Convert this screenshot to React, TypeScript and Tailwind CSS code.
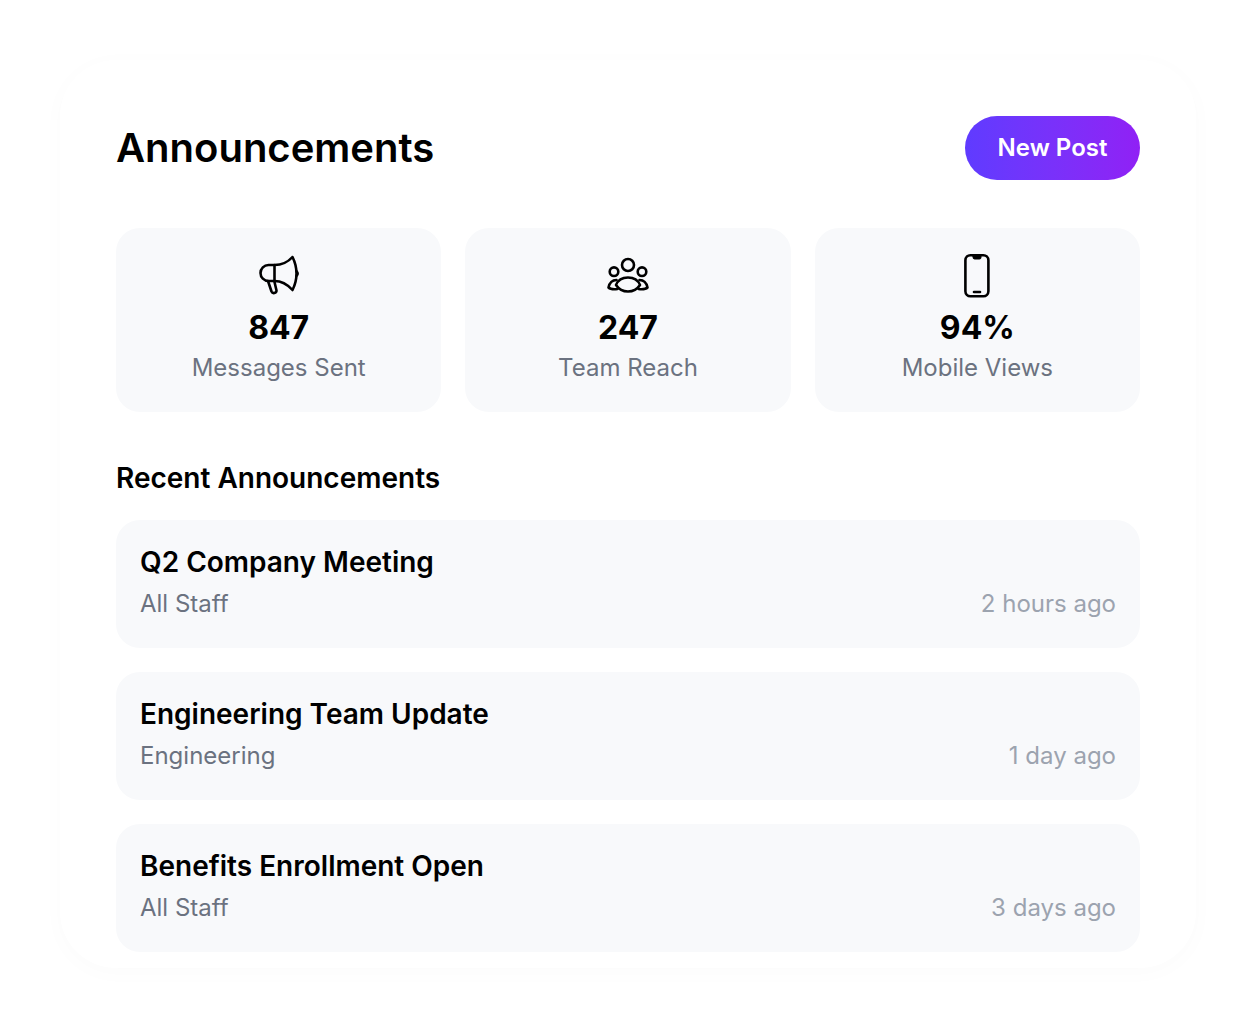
import React from "react";

const MegaphoneIcon = () => (
  <svg width="48" height="48" viewBox="0 0 48 48" fill="none" stroke="#000" strokeWidth="2.6" strokeLinecap="round" strokeLinejoin="round">
    <path d="M37.5 5C33 10 26 13 19.5 13H13.5a8 8 0 0 0 0 16H19.5C26 29 33 33 37.5 38C40 33 41.5 27 41.5 21.5C41.5 16 40 10 37.5 5Z" />
    <path d="M19.5 13V29" />
    <path d="M13 29L16.5 39.5a2.6 2.6 0 0 0 5-1L19.5 30" />
    <path d="M41.8 19.5c.8 1 .8 3 0 4" />
  </svg>
);

const TeamIcon = () => (
  <svg width="48" height="48" viewBox="0 0 48 48" fill="none" stroke="#000" strokeWidth="2.6" strokeLinecap="round" strokeLinejoin="round">
    <circle cx="24" cy="13" r="6" />
    <circle cx="10" cy="19.7" r="4.3" />
    <circle cx="38" cy="19.7" r="4.3" />
    <path d="M12 33C14 28 18 25.5 24 25.5C30 25.5 34 28 36 33C33 37.5 29 39.5 24 39.5C19 39.5 15 37.5 12 33Z" />
    <path d="M12.5 28C8 28 5.5 31 4.5 35.5C6 37 9 37.5 13.5 37" />
    <path d="M35.5 28C40 28 42.5 31 43.5 35.5C42 37 39 37.5 34.5 37" />
  </svg>
);

const PhoneIcon = () => (
  <svg width="48" height="48" viewBox="0 0 48 48" fill="none" stroke="#000" strokeWidth="2.6" strokeLinecap="round" strokeLinejoin="round">
    <rect x="12.4" y="3.2" width="23" height="41" rx="5" />
    <path d="M20 3.5H28V5.5a1.5 1.5 0 0 1-1.5 1.5H21.5A1.5 1.5 0 0 1 20 5.5Z" fill="#000" strokeWidth="1" />
    <path d="M21 40H27" />
  </svg>
);

const stats = [
  { icon: <MegaphoneIcon />, value: "847", label: "Messages Sent" },
  { icon: <TeamIcon />, value: "247", label: "Team Reach" },
  { icon: <PhoneIcon />, value: "94%", label: "Mobile Views" },
];

const announcements = [
  { title: "Q2 Company Meeting", audience: "All Staff", time: "2 hours ago" },
  { title: "Engineering Team Update", audience: "Engineering", time: "1 day ago" },
  { title: "Benefits Enrollment Open", audience: "All Staff", time: "3 days ago" },
];

export default function App() {
  return (
    <div className="bg-white p-[60px] font-['Inter',sans-serif]">
      <div className="h-[908px] rounded-[56px] bg-white px-14 pt-14 shadow-[0_4px_24px_rgba(0,0,0,0.02)]">
        {/* header */}
        <div className="mb-12 flex items-center justify-between">
          <h1 className="text-[40px] font-semibold leading-[48px] text-black">Announcements</h1>
          <button className="flex h-16 w-[175px] items-center justify-center rounded-[32px] bg-gradient-to-r from-[#5f3bff] to-[#9020f5] text-2xl font-semibold text-white">
            New Post
          </button>
        </div>

        <div className="mb-12 grid grid-cols-3 gap-6">
          {stats.map((s) => (
            <div key={s.label} className="flex h-[184px] flex-col items-center rounded-3xl bg-[#f8f9fb] pt-6">
              {s.icon}
              <div className="mt-2 text-[32px] font-bold leading-10 text-black">{s.value}</div>
              <div className="mt-1 text-2xl leading-8 text-[#6b7280]">{s.label}</div>
            </div>
          ))}
        </div>

        <h2 className="mb-6 text-[28px] font-semibold leading-9 text-black">Recent Announcements</h2>

        <div className="flex flex-col gap-6">
          {announcements.map((a) => (
            <div key={a.title} className="h-32 rounded-3xl bg-[#f8f9fb] p-6">
              <div className="text-[28px] font-semibold leading-9 text-black">{a.title}</div>
              <div className="mt-2 flex items-center justify-between text-2xl leading-8">
                <span className="text-[#6b7280]">{a.audience}</span>
                <span className="text-[#9ca3af]">{a.time}</span>
              </div>
            </div>
          ))}
        </div>
      </div>
    </div>
  );
}
